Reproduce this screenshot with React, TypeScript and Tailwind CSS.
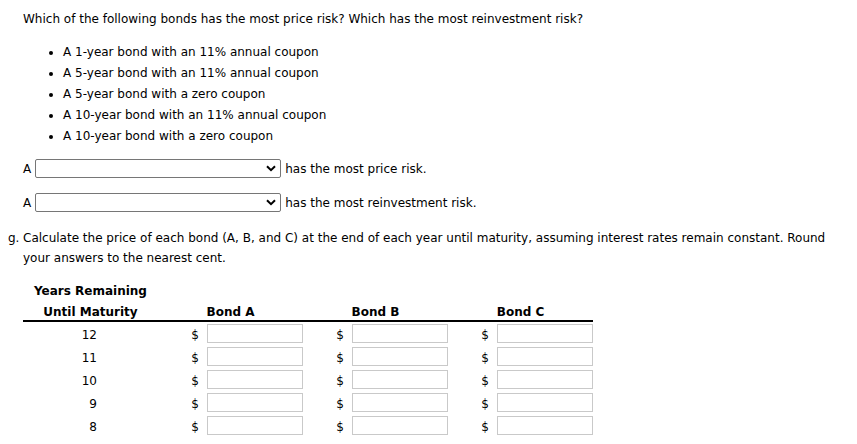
import React from "react";

const bullets = [
  "A 1-year bond with an 11% annual coupon",
  "A 5-year bond with an 11% annual coupon",
  "A 5-year bond with a zero coupon",
  "A 10-year bond with an 11% annual coupon",
  "A 10-year bond with a zero coupon",
];

const years = ["12", "11", "10", "9", "8"];

function Select() {
  return (
    <div className="relative w-[246px] h-[19px] border border-[#767676] rounded-[2px] bg-white">
      <svg
        className="absolute right-[4px] top-[5px]"
        width="10"
        height="7"
        viewBox="0 0 10 7"
      >
        <path d="M1 1.2 L5 5.2 L9 1.2" fill="none" stroke="#000" strokeWidth="2" />
      </svg>
    </div>
  );
}

function MoneyCell() {
  return (
    <div className="w-[145px] flex items-center justify-end">
      <span className="mr-[8px] pt-[3px]">$</span>
      <div className="w-[96px] h-[19px] border border-[#c9c9c9] bg-white" />
    </div>
  );
}

export default function App() {
  return (
    <div
      className="w-[857px] h-[444px] bg-white text-black text-[12px] pl-[8px] overflow-hidden"
      style={{ fontFamily: '"DejaVu Sans", Verdana, sans-serif' }}
    >
      <div className="pl-[15px] pt-[11px] leading-[17px]">
        Which of the following bonds has the most price risk? Which has the most reinvestment risk?
      </div>
      <ul className="mt-[13px] pl-[55px]">
        {bullets.map((b) => (
          <li key={b} className="flex items-center leading-[21px] h-[21px] pt-[2px]">
            <span className="w-[4px] h-[4px] rounded-full bg-black -ml-[14px] mr-[10px]" />
            {b}
          </li>
        ))}
      </ul>
      <div className="pl-[15px] mt-[13px] flex items-center h-[19px]">
        <span className="mr-[4px]">A</span>
        <Select />
        <span className="ml-[4px]">has the most price risk.</span>
      </div>
      <div className="pl-[15px] mt-[15px] flex items-center h-[19px]">
        <span className="mr-[4px]">A</span>
        <Select />
        <span className="ml-[4px]">has the most reinvestment risk.</span>
      </div>
      <div className="mt-[16px] leading-[20px] flex">
        <span className="w-[15px] shrink-0">g.</span>
        <span className="w-[815px]">
          Calculate the price of each bond (A, B, and C) at the end of each year until maturity, assuming interest rates remain constant. Round your answers to the nearest cent.
        </span>
      </div>
      <div className="ml-[15px] mt-[13px] w-[570px]">
        <div className="flex pt-[1px] leading-[19px] font-bold">
          <div className="w-[135px] text-center">Years Remaining</div>
        </div>
        <div className="flex pt-[3px] leading-[16px] font-bold border-b-2 border-black">
          <div className="w-[135px] text-center">Until Maturity</div>
          <div className="w-[145px] text-center">Bond A</div>
          <div className="w-[145px] text-center">Bond B</div>
          <div className="w-[145px] text-center">Bond C</div>
        </div>
        {years.map((y) => (
          <div key={y} className="flex items-center h-[23px]">
            <div className="w-[135px] text-right pr-[61px] pt-[3px]">{y}</div>
            <MoneyCell />
            <MoneyCell />
            <MoneyCell />
          </div>
        ))}
      </div>
    </div>
  );
}
